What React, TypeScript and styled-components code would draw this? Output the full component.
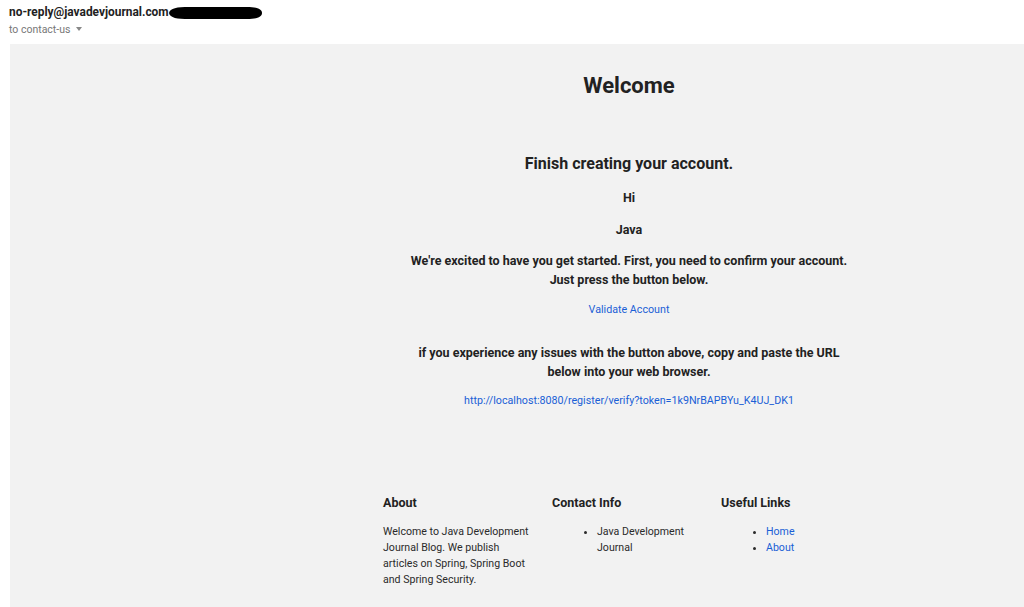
import styled, { createGlobalStyle } from 'styled-components'

const GlobalStyle = createGlobalStyle`
  html, body {
    margin: 0;
    padding: 0;
    background: #ffffff;
  }
  body {
    font-family: Roboto, "Liberation Sans", Arial, sans-serif;
    color: #222222;
    overflow: hidden;
  }
`

const Page = styled.div`
  width: 1024px;
  height: 607px;
  display: flex;
  flex-direction: column;
`

const Header = styled.header`
  height: 44px;
  padding-left: 9px;
  display: flex;
  flex-direction: column;
`

const SenderRow = styled.div`
  display: flex;
  align-items: center;
  margin-top: 4px;
  height: 17px;
`

const Sender = styled.span`
  font-size: 11.9px;
  font-weight: 700;
  line-height: 17px;
  color: #222222;
`

const Recipient = styled.div`
  display: flex;
  align-items: center;
  gap: 6px;
  margin-top: 1px;
  font-size: 10.5px;
  line-height: 16px;
  color: #777777;
`

const Caret = styled.span`
  width: 0;
  height: 0;
  border-left: 3.5px solid transparent;
  border-right: 3.5px solid transparent;
  border-top: 4px solid #888888;
  margin-top: -2px;
`

const Panel = styled.main`
  flex: 1;
  margin-left: 10px;
  background: #f2f2f2;
  display: flex;
`

const Column = styled.div`
  width: 520px;
  margin-left: 359px;
  display: flex;
  flex-direction: column;
  align-items: center;
  text-align: center;
`

const Title = styled.h1`
  margin: 28px 0 0;
  font-size: 22px;
  line-height: 28px;
  font-weight: 700;
`

const Subtitle = styled.h2`
  margin: 53px 0 0;
  font-size: 16px;
  line-height: 22px;
  font-weight: 700;
`

const Line = styled.p<{ $gap: number }>`
  margin: ${(p) => p.$gap}px 0 0;
  font-size: 12.5px;
  line-height: 19px;
  font-weight: 700;
`

const Link = styled.a<{ $gap: number }>`
  display: block;
  margin-top: ${(p) => p.$gap}px;
  font-size: 10.7px;
  line-height: 16px;
  color: #1a5fd6;
  text-decoration: none;
`

const Footer = styled.div`
  align-self: stretch;
  margin-top: 85px;
  padding-left: 14px;
  display: grid;
  grid-template-columns: repeat(3, 169px);
  text-align: left;
`

const FooterCol = styled.div`
  display: flex;
  flex-direction: column;
`

const FooterHeading = styled.h3`
  margin: 0;
  font-size: 12.5px;
  line-height: 18px;
  font-weight: 700;
`

const FooterText = styled.p`
  margin: 12px 0 0;
  width: 150px;
  font-size: 10.6px;
  line-height: 16px;
  color: #2a2a2a;
`

const FooterList = styled.ul`
  margin: 12px 0 0;
  padding-left: 45px;
  font-size: 10.6px;
  line-height: 16px;
  color: #2a2a2a;
`

const FooterLink = styled.a`
  color: #1a5fd6;
  text-decoration: none;
`

const Redaction = () => (
  <svg width="96" height="18" viewBox="0 0 96 18" style={{ marginLeft: -2 }}>
    <path
      d="M2 9 C3 4 10 3 22 3 L80 3 C90 3 95 5 95 9 C95 13 90 15 80 15 L22 15 C10 15 3 14 2 9 Z"
      fill="#000000"
    />
  </svg>
)

export default function App() {
  return (
    <Page>
      <GlobalStyle />
      <Header>
        <SenderRow>
          <Sender>no-reply@javadevjournal.com</Sender>
          <Redaction />
        </SenderRow>
        <Recipient>
          to contact-us
          <Caret />
        </Recipient>
      </Header>
      <Panel>
        <Column>
          <Title>Welcome</Title>
          <Subtitle>Finish creating your account.</Subtitle>
          <Line $gap={13}>Hi</Line>
          <Line $gap={13}>Java</Line>
          <Line $gap={12}>
            We're excited to have you get started. First, you need to confirm your account.
            <br />
            Just press the button below.
          </Line>
          <Link $gap={13} href="#">
            Validate Account
          </Link>
          <Line $gap={25}>
            if you experience any issues with the button above, copy and paste the URL
            <br />
            below into your web browser.
          </Line>
          <Link $gap={12} href="#">
            http://localhost:8080/register/verify?token=1k9NrBAPBYu_K4UJ_DK1
          </Link>
          <Footer>
            <FooterCol>
              <FooterHeading>About</FooterHeading>
              <FooterText>
                Welcome to Java Development Journal Blog. We publish articles on Spring, Spring
                Boot and Spring Security.
              </FooterText>
            </FooterCol>
            <FooterCol>
              <FooterHeading>Contact Info</FooterHeading>
              <FooterList>
                <li>Java Development Journal</li>
              </FooterList>
            </FooterCol>
            <FooterCol>
              <FooterHeading>Useful Links</FooterHeading>
              <FooterList>
                <li>
                  <FooterLink href="#">Home</FooterLink>
                </li>
                <li>
                  <FooterLink href="#">About</FooterLink>
                </li>
              </FooterList>
            </FooterCol>
          </Footer>
        </Column>
      </Panel>
    </Page>
  )
}
